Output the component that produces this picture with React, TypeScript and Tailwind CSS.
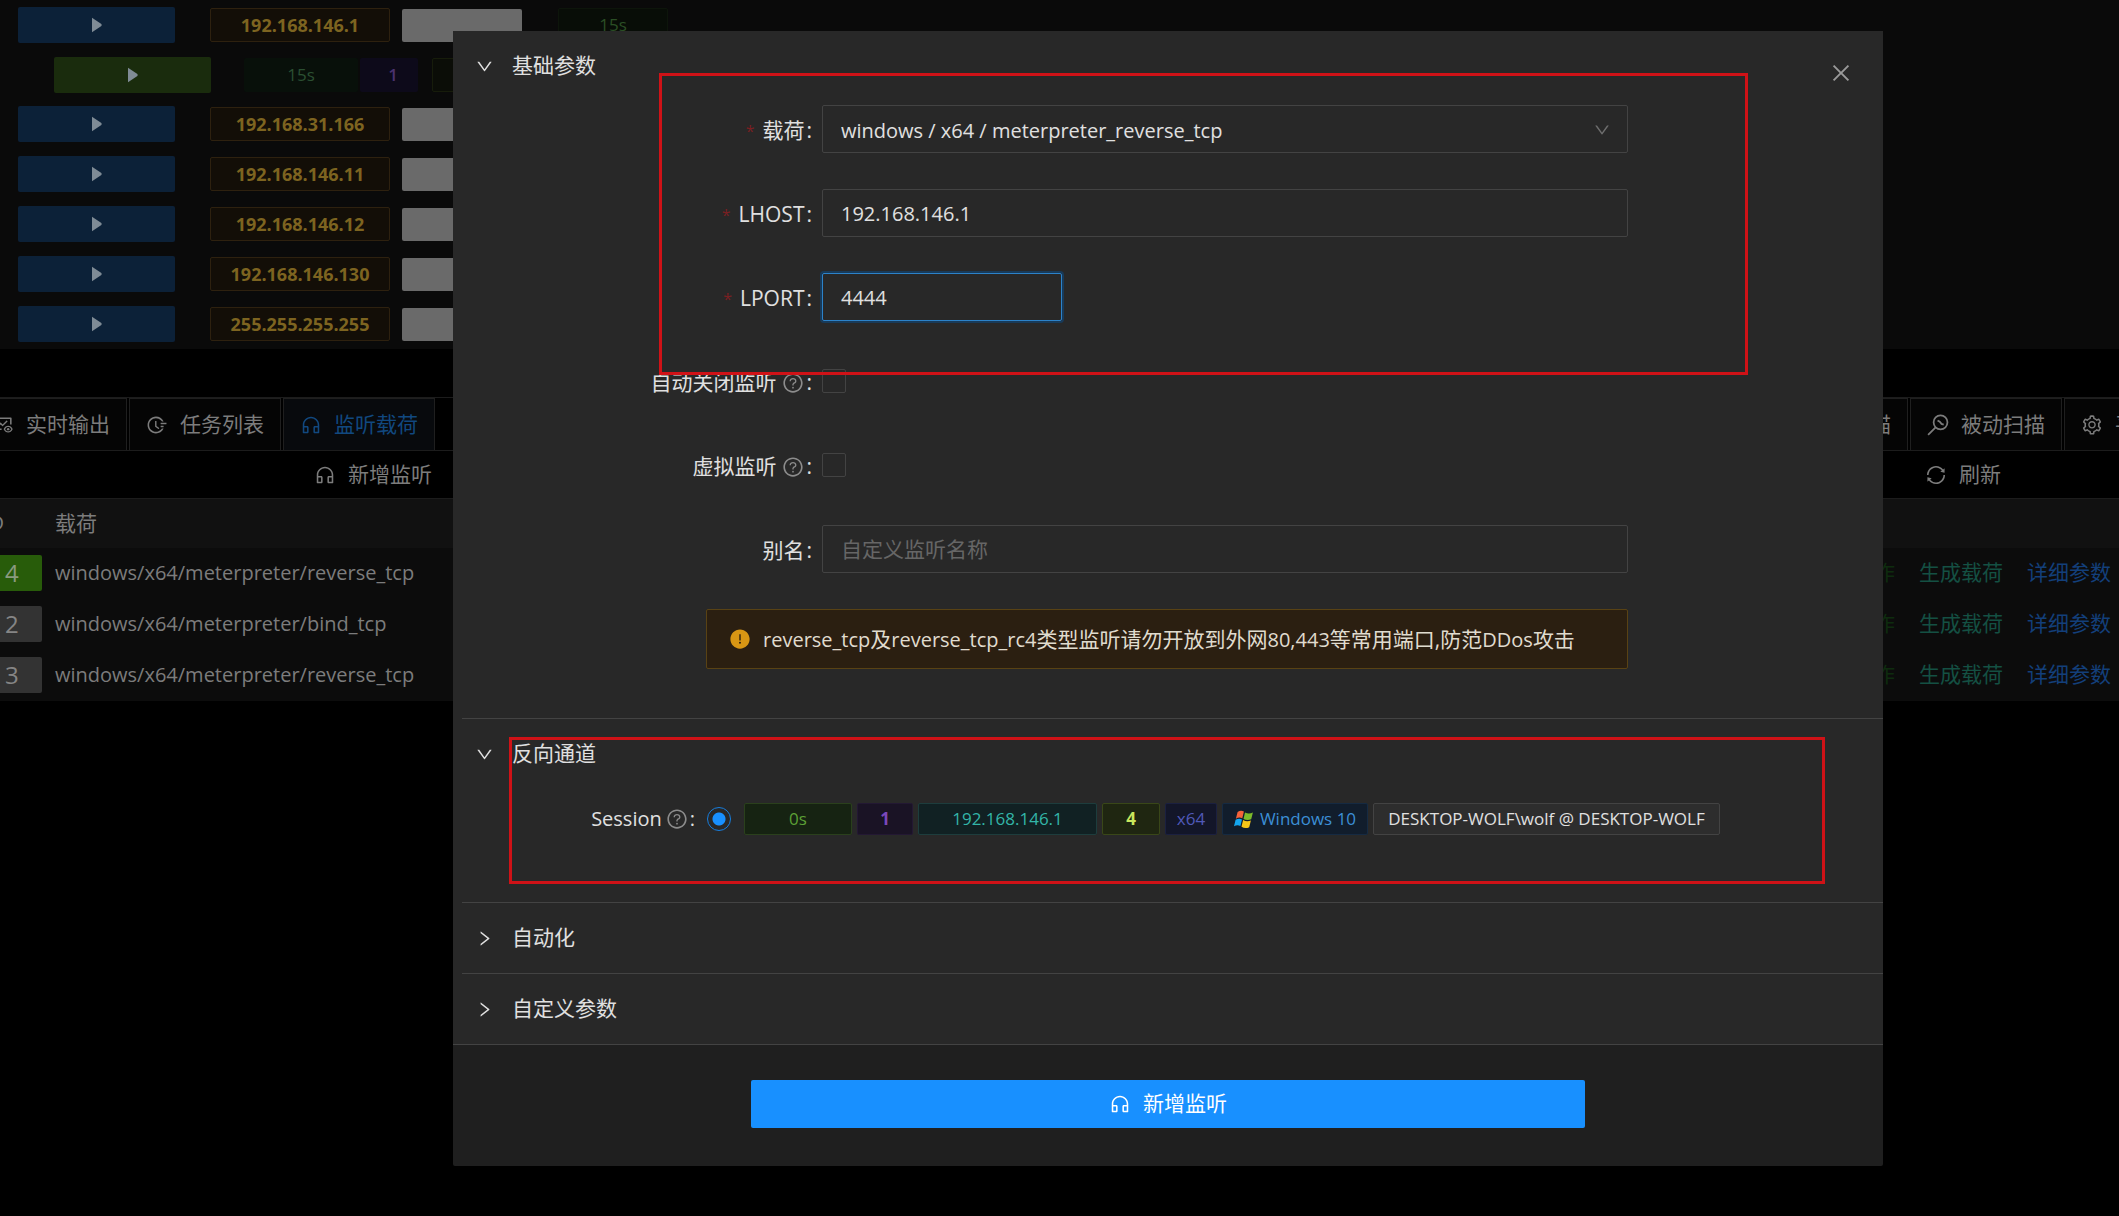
import type { ReactNode } from 'react';
import {
  AiFillExclamationCircle,
  AiOutlineClose,
  AiOutlineCustomerService,
  AiOutlineDown,
  AiOutlineFieldTime,
  AiOutlineFundView,
  AiOutlineQuestionCircle,
  AiOutlineRight,
  AiOutlineSetting,
  AiOutlineSync,
} from 'react-icons/ai';

const FONT = 'font-["Open_Sans","Noto_Sans_CJK_SC",sans-serif]';

function PlayIcon() {
  return (
    <svg viewBox="0 0 10 16" className="h-4 w-2.5 fill-[#7f8b95]" aria-hidden="true">
      <path d="M0 0.8 L9.4 7 Q10 8 9.4 9 L0 15.2 Z" />
    </svg>
  );
}

function WindowsLogo() {
  return (
    <svg viewBox="0 0 20 19" className="h-[19px] w-5 shrink-0" aria-hidden="true">
      <path d="M3.6 2 Q6.5 -0.2 9.9 1.4 L8.3 8.2 Q5 6.8 1.9 8.7 Z" fill="#f4623a" />
      <path d="M11 2.4 Q14.5 4.4 18.9 2.6 L17.2 9.2 Q13.3 10.9 9.5 8.9 Z" fill="#7cbb2a" />
      <path d="M1.6 9.8 Q4.8 8 8 9.4 L6.4 16 Q3.3 14.6 0 16.3 Z" fill="#14a6f0" />
      <path d="M9.1 10 Q12.9 12.2 16.9 10.4 L15.2 17.2 Q11.2 19.1 7.5 16.8 Z" fill="#f5c518" />
    </svg>
  );
}

function PassiveScanIcon() {
  return (
    <svg viewBox="0 0 20 20" className="size-[22px] fill-none stroke-current" strokeWidth="1.6" aria-hidden="true">
      <circle cx="12.3" cy="7.6" r="6.3" />
      <path d="M7.6 12.3 L1 19 M9.6 5.8 l2 1.2 1.6 2 2 0.6" />
    </svg>
  );
}

const hosts = ['192.168.146.1', '192.168.31.166', '192.168.146.11', '192.168.146.12', '192.168.146.130', '255.255.255.255'];

function HostRow({ ip, first }: { ip: string; first: boolean }) {
  return (
    <div className="flex h-[50px] shrink-0 items-center pl-[18px]">
      <button type="button" aria-label="展开" className="flex h-9 w-[157px] items-center justify-center rounded-xs bg-[#0c2138]">
        <PlayIcon />
      </button>
      <span className="ml-[35px] flex h-[34px] w-[180px] items-center justify-center rounded-xs border border-[#2e210f] bg-[#130e07] text-[18px] font-bold text-[#7d6420]">
        {ip}
      </span>
      <span className="ml-3 h-[33px] w-[120px] rounded-xs bg-[#6a6a6a]" />
      {first && (
        <span className="ml-9 flex h-[34px] w-[110px] items-center justify-center rounded-xs border border-[#0d150b] bg-[#080d07] text-[17px] text-[#2b4f25]">
          15s
        </span>
      )}
    </div>
  );
}

function SessionRow() {
  return (
    <div className="flex h-[49px] shrink-0 items-center pl-[54px]">
      <button type="button" aria-label="展开" className="flex h-9 w-[157px] items-center justify-center rounded-xs bg-[#1a2c0d]">
        <PlayIcon />
      </button>
      <span className="ml-[33px] flex h-[34px] w-[114px] items-center justify-center rounded-xs bg-[#08100a] text-[17px] text-[#2b4f32]">15s</span>
      <span className="ml-[2px] flex h-[34px] w-[58px] items-center justify-center rounded-xs bg-[#0d0a1a] pl-2 text-[17px] font-semibold text-[#4a3270]">1</span>
      <span className="ml-[14px] h-[34px] w-[58px] rounded-xs border border-[#171c0b] bg-[#0b0d07]" />
    </div>
  );
}

function Tab({ icon, label, active, className }: { icon?: ReactNode; label: string; active?: boolean; className: string }) {
  return (
    <button
      type="button"
      className={`flex h-[52px] shrink-0 items-center gap-3 border border-b-0 border-[#1f1f1f] px-4 text-[21px] whitespace-nowrap ${
        active ? 'bg-[#080a0d] text-[#11487f]' : 'bg-[#050505] text-[#7c7c7c]'
      } ${className}`}
    >
      {icon}
      {label}
    </button>
  );
}

const listeners = [
  { id: '4', payload: 'windows/x64/meterpreter/reverse_tcp', on: true },
  { id: '2', payload: 'windows/x64/meterpreter/bind_tcp', on: false },
  { id: '3', payload: 'windows/x64/meterpreter/reverse_tcp', on: false },
];

function Workspace() {
  return (
    <div className="flex min-h-screen flex-col overflow-hidden bg-black">
      <section className="flex flex-col bg-[#0a0a0a]">
        <HostRow ip={hosts[0]} first />
        <SessionRow />
        {hosts.slice(1).map((ip) => (
          <HostRow key={ip} ip={ip} first={false} />
        ))}
      </section>

      <nav className="mt-12 flex justify-between border-t border-b border-[#1c1c1c]">
        <div className="flex gap-[2px]">
          <Tab icon={<AiOutlineFundView size={22} />} label="实时输出" className="-ml-[25px]" />
          <Tab icon={<AiOutlineFieldTime size={22} />} label="任务列表" className="" />
          <Tab icon={<AiOutlineCustomerService size={22} />} label="监听载荷" active className="" />
        </div>
        <div className="flex gap-[2px]">
          <Tab label="主动扫描" className="" />
          <Tab icon={<PassiveScanIcon />} label="被动扫描" className="" />
          <Tab icon={<AiOutlineSetting size={22} />} label="平台设置" className="-mr-[97px]" />
        </div>
      </nav>

      <div className="flex h-[47px] items-center justify-between pr-[118px] pl-[314px] text-[21px] text-[#7c7c7c]">
        <button type="button" className="flex items-center gap-3">
          <AiOutlineCustomerService size={22} />
          新增监听
        </button>
        <button type="button" className="flex items-center gap-3">
          <AiOutlineSync size={22} />
          刷新
        </button>
      </div>

      <table className="w-full border-t border-[#1c1c1c] bg-[#0c0c0c] text-left text-[20px] text-[#7c7c7c]">
        <thead className="bg-[#111111]">
          <tr className="h-[49px]">
            <th scope="col" className="w-[55px] font-normal">
              <span className="-ml-4">ID</span>
            </th>
            <th scope="col" className="text-[21px] font-normal">载荷</th>
            <th scope="col" aria-label="操作" />
          </tr>
        </thead>
        <tbody>
          {listeners.map((l) => (
            <tr key={l.id} className="h-[51px]">
              <td>
                <span className={`flex h-9 w-[42px] items-center rounded-r-xs pl-[5px] text-[24px] ${l.on ? 'bg-[#285c0a] text-[#8a9a80]' : 'bg-[#333333] text-[#858585]'}`}>
                  {l.id}
                </span>
              </td>
              <td>{l.payload}</td>
              <td>
                <div className="flex justify-end gap-6 pr-2 text-[21px]">
                  <a href="#edit" className="text-[#0e2c0e]">工作</a>
                  <a href="#payload" className="text-[#145043]">生成载荷</a>
                  <a href="#detail" className="text-[#133f7a]">详细参数</a>
                </div>
              </td>
            </tr>
          ))}
        </tbody>
      </table>
    </div>
  );
}

function Field({ id, label, required, help, children }: { id: string; label: string; required?: boolean; help?: boolean; children: ReactNode }) {
  return (
    <div className="flex h-12 items-center">
      <div className="flex w-[360px] shrink-0 items-center justify-end pt-[3px] pr-[10px] text-[21px] text-[#e0e0e0]">
        {required && <span className="mr-2 text-base text-[#7a1f22]">*</span>}
        <label htmlFor={id} className="flex items-center whitespace-nowrap">
          {label}
          {help && <AiOutlineQuestionCircle size={22} className="ml-1.5 text-[#8c8c8c]" />}
          <span className="ml-0.5">:</span>
        </label>
      </div>
      {children}
    </div>
  );
}

function SectionHeader({ label, open }: { label: string; open: boolean }) {
  return (
    <button type="button" aria-expanded={open} className="flex h-[70px] w-full items-center gap-[18px] pl-[13px] text-[21px] text-[#e0e0e0]">
      {open ? <AiOutlineDown size={19} /> : <AiOutlineRight size={19} />}
      {label}
    </button>
  );
}

function Tag({ className, children }: { className: string; children: ReactNode }) {
  return (
    <span className={`flex h-8 items-center justify-center rounded-xs border text-[17px] whitespace-nowrap ${className}`}>{children}</span>
  );
}

function ListenerDialog() {
  const box = 'h-12 rounded-xs border border-[#434343] bg-transparent px-[18px] text-[20px] text-[#e0e0e0] outline-none';
  return (
    <div role="dialog" aria-label="新增监听" className="relative flex flex-1 flex-col rounded-xs bg-[#1f1f1f]">
      <button type="button" aria-label="关闭" className="absolute top-[30px] right-[30px] text-[#9a9a9a]">
        <AiOutlineClose size={24} />
      </button>

      <div className="border-b border-[#434343] bg-[#282828] pl-[9px]">
        <section className="border-b border-[#434343]">
          <SectionHeader label="基础参数" open />
          <div className="flex flex-col gap-9 pt-1 pr-[255px] pb-[49px]">
            <Field id="payload" label="载荷" required>
              <div className="relative flex flex-1">
                <select id="payload" className={`${box} flex-1 appearance-none pt-[3px]`}>
                  <option>windows / x64 / meterpreter_reverse_tcp</option>
                </select>
                <AiOutlineDown size={18} className="pointer-events-none absolute top-4 right-[17px] text-[#6e6e6e]" />
              </div>
            </Field>
            <Field id="lhost" label="LHOST" required>
              <input id="lhost" defaultValue="192.168.146.1" className={`${box} flex-1`} />
            </Field>
            <Field id="lport" label="LPORT" required>
              <input
                id="lport"
                defaultValue="4444"
                className="h-12 w-60 rounded-xs border border-[#2c82c9] bg-transparent px-[18px] text-[20px] text-[#e0e0e0] shadow-[0_0_0_2px_#183a59] outline-none"
              />
            </Field>
            <Field id="autoclose" label="自动关闭监听" help>
              <input id="autoclose" type="checkbox" className="size-6 appearance-none rounded-xs border border-[#434343]" />
            </Field>
            <Field id="virtual" label="虚拟监听" help>
              <input id="virtual" type="checkbox" className="size-6 appearance-none rounded-xs border border-[#434343]" />
            </Field>
            <Field id="alias" label="别名">
              <input id="alias" placeholder="自定义监听名称" className="h-12 flex-1 rounded-xs border border-[#434343] bg-transparent px-[18px] text-[21px] text-[#e0e0e0] outline-none placeholder:text-[#666666]" />
            </Field>
            <div role="alert" className="ml-[244px] flex h-[60px] items-center rounded-xs border border-[#594214] bg-[#2b1f11] pl-[22px] text-[#e0dccf]">
              <AiFillExclamationCircle size={22} className="mr-3 shrink-0 text-[#d89614]" />
              <p className="pt-0.5 text-[21px] whitespace-nowrap">
                <span className="text-[20px]">reverse_tcp</span>及<span className="text-[20px]">reverse_tcp_rc4</span>
                类型监听请勿开放到外网<span className="text-[20px]">80,443</span>等常用端口,防范
                <span className="text-[20px]">DDos</span>攻击
              </p>
            </div>
          </div>
        </section>

        <section className="border-b border-[#434343]">
          <SectionHeader label="反向通道" open />
          <div className="flex h-[113px] pt-[14px]">
            <div className="flex h-8 items-center">
              <div className="flex w-[245px] shrink-0 items-center justify-end pr-3 text-[20px] text-[#e0e0e0]">
                <span>Session</span>
                <AiOutlineQuestionCircle size={22} className="ml-1 text-[#8c8c8c]" />
                <span className="ml-0.5">:</span>
              </div>
              <label className="flex items-center">
                <input
                  type="radio"
                  name="session"
                  defaultChecked
                  aria-label="Session 1"
                  className="mr-[13px] size-6 appearance-none rounded-full border border-[#177ddc] bg-[radial-gradient(circle,#1890ff_6px,transparent_7px)]"
                />
                <span className="flex gap-[5px]">
                  <Tag className="w-[108px] border-[#2a401c] bg-[#162312] text-[#5ca036]">0s</Tag>
                  <Tag className="w-[56px] border-[#231833] bg-[#1a1325] font-bold text-[#7b48bb]">1</Tag>
                  <Tag className="w-[179px] border-[#1d3d3d] bg-[#112123] text-[#33b5a8]">192.168.146.1</Tag>
                  <Tag className="w-[58px] border-[#394718] bg-[#1f2611] font-bold text-[#c9e75d]">4</Tag>
                  <Tag className="w-[52px] border-[#1b2040] bg-[#131629] text-[#5059b8]">x64</Tag>
                  <Tag className="w-[146px] gap-1.5 border-[#152a42] bg-[#111d2c] text-[#3c8fd6]">
                    <WindowsLogo />
                    Windows 10
                  </Tag>
                  <Tag className="w-[347px] border-[#434343] bg-[#2d2d2d] text-[#e0e0e0]">DESKTOP-WOLF\wolf @ DESKTOP-WOLF</Tag>
                </span>
              </label>
            </div>
          </div>
        </section>

        <section className="border-b border-[#434343]">
          <SectionHeader label="自动化" open={false} />
        </section>
        <section>
          <SectionHeader label="自定义参数" open={false} />
        </section>
      </div>

      <footer className="flex justify-center px-[298px] pt-[35px] pb-[38px]">
        <button type="submit" className="flex h-12 flex-1 items-center justify-center gap-3 rounded-xs bg-[#1890ff] text-[21px] text-white">
          <AiOutlineCustomerService size={22} />
          新增监听
        </button>
      </footer>

      <div className="pointer-events-none absolute top-[42px] right-[135px] left-[206px] h-[302px] border-3 border-[#cf1217]" />
      <div className="pointer-events-none absolute top-[706px] right-[58px] left-[56px] h-[147px] border-3 border-[#cf1217]" />
    </div>
  );
}

export default function App() {
  return (
    <main className={`relative min-h-screen overflow-hidden bg-black ${FONT}`}>
      <Workspace />
      <div className="absolute inset-0 flex items-start pt-[31px] pr-[236px] pl-[453px]">
        <ListenerDialog />
      </div>
    </main>
  );
}
